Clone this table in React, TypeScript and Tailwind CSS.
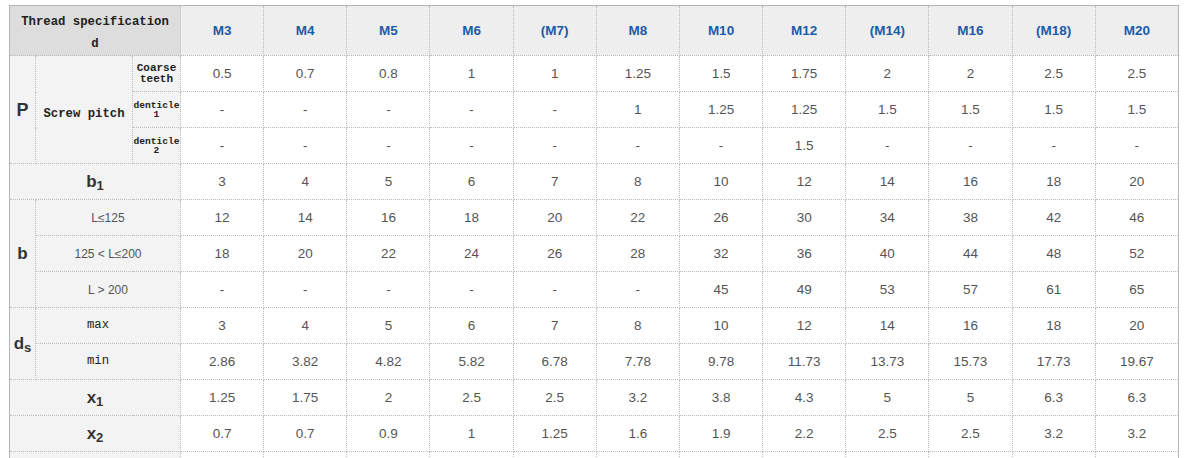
const sizes = ["M3", "M4", "M5", "M6", "(M7)", "M8", "M10", "M12", "(M14)", "M16", "(M18)", "M20"];

const coarse = ["0.5", "0.7", "0.8", "1", "1", "1.25", "1.5", "1.75", "2", "2", "2.5", "2.5"];
const fine1 = ["-", "-", "-", "-", "-", "1", "1.25", "1.25", "1.5", "1.5", "1.5", "1.5"];
const fine2 = ["-", "-", "-", "-", "-", "-", "-", "1.5", "-", "-", "-", "-"];
const b1 = ["3", "4", "5", "6", "7", "8", "10", "12", "14", "16", "18", "20"];
const bShort = ["12", "14", "16", "18", "20", "22", "26", "30", "34", "38", "42", "46"];
const bMid = ["18", "20", "22", "24", "26", "28", "32", "36", "40", "44", "48", "52"];
const bLong = ["-", "-", "-", "-", "-", "-", "45", "49", "53", "57", "61", "65"];
const dsMax = ["3", "4", "5", "6", "7", "8", "10", "12", "14", "16", "18", "20"];
const dsMin = ["2.86", "3.82", "4.82", "5.82", "6.78", "7.78", "9.78", "11.73", "13.73", "15.73", "17.73", "19.67"];
const x1 = ["1.25", "1.75", "2", "2.5", "2.5", "3.2", "3.8", "4.3", "5", "5", "6.3", "6.3"];
const x2 = ["0.7", "0.7", "0.9", "1", "1.25", "1.6", "1.9", "2.2", "2.5", "2.5", "3.2", "3.2"];

const cell = "border border-dotted border-[#bdbdbd] p-0 text-center align-middle";
const label = `${cell} bg-[#f3f3f3]`;
const mono = "font-['Liberation_Mono',monospace] text-[#222]";
const big = "font-['Liberation_Sans',Arial,sans-serif] text-[17px] font-bold text-[#333]";

function Values({ list }: { list: string[] }) {
  return (
    <>
      {list.map((v, i) => (
        <td key={i} className={`${cell} bg-white pt-[2px] text-[13.5px] text-[#555]`}>
          {v}
        </td>
      ))}
    </>
  );
}

function Tiny({ top, bottom }: { top: string; bottom: string }) {
  return (
    <div className="flex flex-col items-center">
      <span className="block text-[9.6px] leading-[10px]">{top}</span>
      <span className="-mt-px block text-[9.6px] leading-[9px]">{bottom}</span>
    </div>
  );
}

export default function App() {
  return (
    <div className="h-[458px] overflow-hidden bg-white pl-[9px] pt-[5px] font-['Liberation_Sans',Arial,sans-serif]">
      <table className="w-[1170px] table-fixed border-collapse border border-solid border-[#b5b5b5]">
        <colgroup>
          <col className="w-[26px]" />
          <col className="w-[97px]" />
          <col className="w-[48px]" />
          {sizes.map((s) => (
            <col key={s} />
          ))}
        </colgroup>
        <tbody>
          <tr className="h-[50px]">
            <td colSpan={3} className={`${cell} bg-[#dddddd] ${mono} pt-[4px] text-[12.3px] font-bold leading-[22px]`}>
              Thread specification
              <br />d
            </td>
            {sizes.map((s) => (
              <td key={s} className={`${cell} bg-[#eeeeee] pt-[2px] text-[13.5px] font-bold text-[#1d5ba8]`}>
                {s}
              </td>
            ))}
          </tr>

          <tr className="h-[36px]">
            <td rowSpan={3} className={`${label} ${big} pt-[2px] text-[18px]`}>
              P
            </td>
            <td rowSpan={3} className={`${label} ${mono} pt-[10px] text-[12.3px] font-bold`}>
              Screw pitch
            </td>
            <td className={`${label} ${mono} font-bold`}>
              <div className="flex flex-col items-center">
                <span className="block text-[11px] leading-[11px]">Coarse</span>
                <span className="block text-[11px] leading-[10px]">teeth</span>
              </div>
            </td>
            <Values list={coarse} />
          </tr>
          <tr className="h-[36px]">
            <td className={`${label} ${mono} font-bold`}>
              <Tiny top="denticle" bottom="1" />
            </td>
            <Values list={fine1} />
          </tr>
          <tr className="h-[36px]">
            <td className={`${label} ${mono} font-bold`}>
              <Tiny top="denticle" bottom="2" />
            </td>
            <Values list={fine2} />
          </tr>

          <tr className="h-[36px]">
            <td colSpan={3} className={`${label} ${big}`}>
              b<sub className="text-[13px]">1</sub>
            </td>
            <Values list={b1} />
          </tr>

          <tr className="h-[36px]">
            <td rowSpan={3} className={`${label} ${big}`}>
              b
            </td>
            <td colSpan={2} className={`${label} text-[12px] text-[#555]`}>
              L≤125
            </td>
            <Values list={bShort} />
          </tr>
          <tr className="h-[36px]">
            <td colSpan={2} className={`${label} text-[12px] text-[#555]`}>
              125 &lt; L≤200
            </td>
            <Values list={bMid} />
          </tr>
          <tr className="h-[36px]">
            <td colSpan={2} className={`${label} text-[12px] text-[#555]`}>
              L &gt; 200
            </td>
            <Values list={bLong} />
          </tr>

          <tr className="h-[36px]">
            <td rowSpan={2} className={`${label} ${big}`}>
              d<sub className="text-[13px]">s</sub>
            </td>
            <td colSpan={2} className={`${label} ${mono} pr-[20px] text-[12.3px] text-[#111]`}>
              max
            </td>
            <Values list={dsMax} />
          </tr>
          <tr className="h-[36px]">
            <td colSpan={2} className={`${label} ${mono} pr-[20px] text-[12.3px] text-[#111]`}>
              min
            </td>
            <Values list={dsMin} />
          </tr>

          <tr className="h-[36px]">
            <td colSpan={3} className={`${label} ${big}`}>
              x<sub className="text-[13px]">1</sub>
            </td>
            <Values list={x1} />
          </tr>
          <tr className="h-[36px]">
            <td colSpan={3} className={`${label} ${big}`}>
              x<sub className="text-[13px]">2</sub>
            </td>
            <Values list={x2} />
          </tr>
          <tr className="h-[36px]">
            <td colSpan={3} className={label}></td>
            <Values list={sizes.map(() => "")} />
          </tr>
        </tbody>
      </table>
    </div>
  );
}
